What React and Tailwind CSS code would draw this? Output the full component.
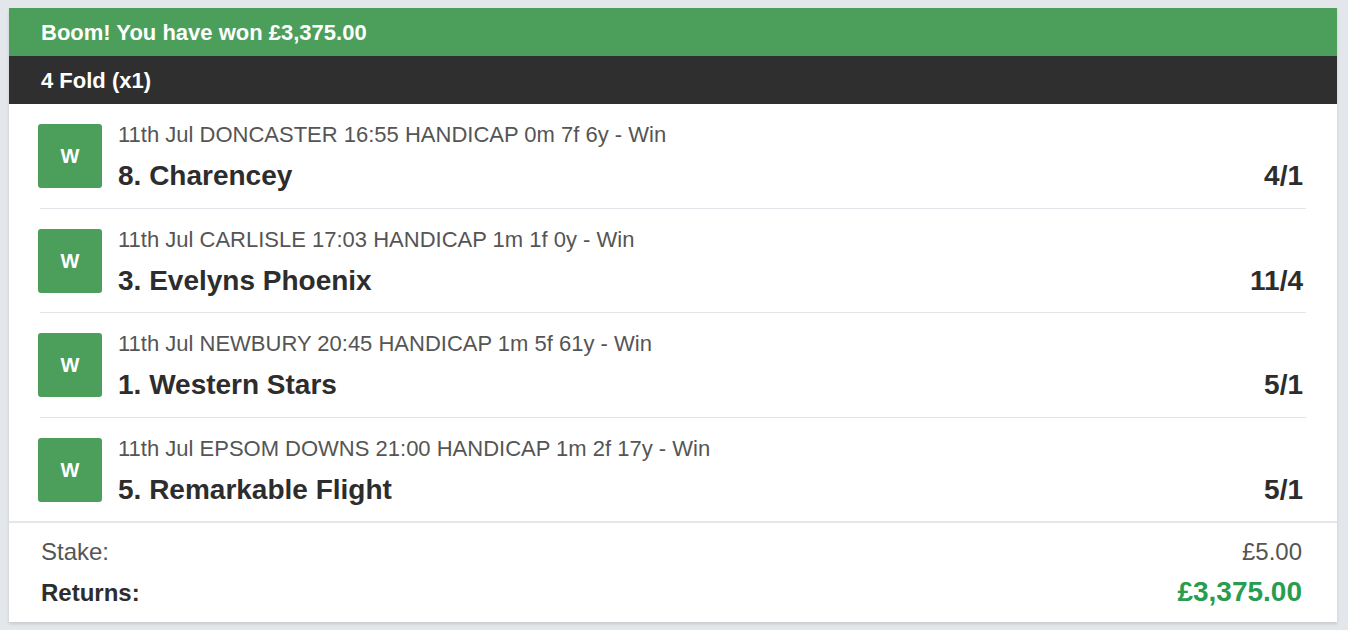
import React from 'react';

const legs = [
  { meta: '11th Jul DONCASTER 16:55 HANDICAP 0m 7f 6y - Win', name: '8. Charencey', odds: '4/1' },
  { meta: '11th Jul CARLISLE 17:03 HANDICAP 1m 1f 0y - Win', name: '3. Evelyns Phoenix', odds: '11/4' },
  { meta: '11th Jul NEWBURY 20:45 HANDICAP 1m 5f 61y - Win', name: '1. Western Stars', odds: '5/1' },
  { meta: '11th Jul EPSOM DOWNS 21:00 HANDICAP 1m 2f 17y - Win', name: '5. Remarkable Flight', odds: '5/1' },
];

const Leg = ({ leg, last }) => (
  <div className={`flex items-start pt-5 pb-[19.5px] ${last ? '' : 'border-b border-[#e1e4e8]'}`}>
    <div className="w-16 h-16 -ml-[2px] rounded-[3px] bg-[#4c9f5b] text-white font-bold text-[20px] flex items-center justify-center shrink-0">
      W
    </div>
    <div className="ml-4 flex-1 min-w-0 h-16">
      <div className="text-[22px] leading-[22px] text-[#555]">{leg.meta}</div>
      <div className="flex items-end justify-between mt-[18px]">
        <div className="text-[28px] leading-6 font-bold text-[#2d2d2d]">{leg.name}</div>
        <div className="text-[28px] leading-6 font-bold text-[#2d2d2d] mr-[3px]">{leg.odds}</div>
      </div>
    </div>
  </div>
);

export default function App() {
  return (
    <div className="min-h-[630px] bg-[#e3e6ea] pt-2 pl-[9px] pr-[11px] font-['Liberation_Sans',Arial,sans-serif]">
      <div className="bg-white shadow-[0_2px_3px_rgba(0,0,0,0.12)]">
        <div className="h-12 bg-[#4c9f5b] text-white font-bold text-[22px] flex items-center px-8">
          Boom! You have won £3,375.00
        </div>
        <div className="h-12 bg-[#2f2f2f] text-white font-bold text-[22px] flex items-center px-8">
          4 Fold (x1)
        </div>
        <div className="px-[31px] border-b-2 border-[#e3e6ea]">
          {legs.map((leg, i) => (
            <Leg key={i} leg={leg} last={i === legs.length - 1} />
          ))}
        </div>
        <div className="px-8 pt-[15px] pb-4">
          <div className="flex justify-between items-baseline text-[24px] leading-7 text-[#555]">
            <span>Stake:</span>
            <span className="mr-[3px]">£5.00</span>
          </div>
          <div className="flex justify-between items-baseline mt-3 h-7 leading-7">
            <span className="text-[24px] font-bold text-[#2d2d2d]">Returns:</span>
            <span className="text-[28px] font-bold text-[#289c50] mr-[3px]">£3,375.00</span>
          </div>
        </div>
      </div>
    </div>
  );
}
